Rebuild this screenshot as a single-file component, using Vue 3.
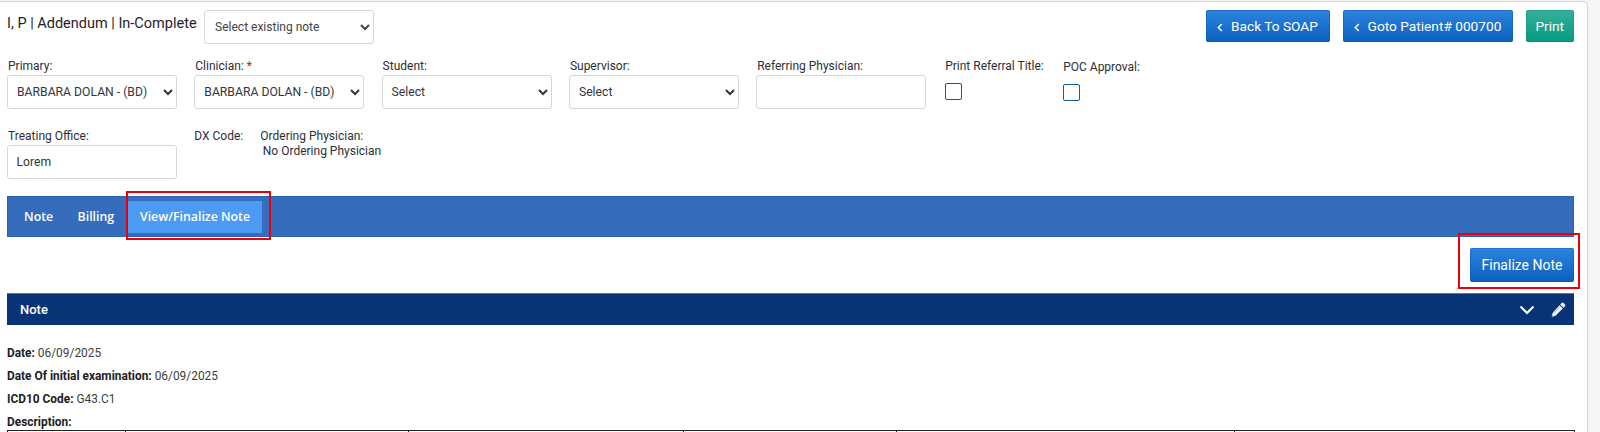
<script setup>
const doctor = 'BARBARA DOLAN - (BD)'
const selects = [
  { label: 'Primary:', value: doctor },
  { label: 'Clinician:', value: doctor, required: true },
  { label: 'Student:', value: 'Select' },
  { label: 'Supervisor:', value: 'Select' },
]
const details = [
  { label: 'Date:', value: '06/09/2025' },
  { label: 'Date Of initial examination:', value: '06/09/2025' },
  { label: 'ICD10 Code:', value: 'G43.C1' },
]
const tableWidths = [118, 283, 275, 213, 338, 340]
</script>

<template>
  <div class="page">
    <main class="card">
      <header class="top">
        <h1 class="title">I, P | Addendum | In-Complete</h1>
        <select class="note-select"><option>Select existing note</option></select>
        <div class="actions">
          <button class="btn btn-back">
            <svg class="lt" width="6" height="9" viewBox="0 0 6 9"><path d="M4.800 1 1.300 4.500 4.800 8" fill="none" stroke="#fff" stroke-width="1.500"/></svg>Back To SOAP
          </button>
          <button class="btn btn-goto">
            <svg class="lt" width="6" height="9" viewBox="0 0 6 9"><path d="M4.800 1 1.300 4.500 4.800 8" fill="none" stroke="#fff" stroke-width="1.500"/></svg>Goto Patient# 000700
          </button>
          <button class="btn btn-print">Print</button>
        </div>
      </header>

      <section class="row row-one">
        <div v-for="s in selects" :key="s.label" class="field">
          <label class="lbl">{{ s.label }}<span v-if="s.required" class="req"> *</span></label>
          <select class="ctl"><option>{{ s.value }}</option></select>
        </div>
        <div class="field field-ref">
          <label class="lbl">Referring Physician:</label>
          <input class="ctl" />
        </div>
        <div class="field field-print">
          <label class="lbl">Print Referral Title:</label>
          <span class="check"></span>
        </div>
        <div class="field field-poc">
          <label class="lbl">POC Approval:</label>
          <span class="check"></span>
        </div>
      </section>

      <section class="row row-two">
        <div class="field">
          <label class="lbl">Treating Office:</label>
          <input class="ctl" value="Lorem" />
        </div>
        <div class="dx">DX Code:</div>
        <div class="ordering">
          <div>Ordering Physician:</div>
          <div class="ordering-value">No Ordering Physician</div>
        </div>
      </section>

      <nav class="tabs">
        <a class="tab tab-first">Note</a>
        <a class="tab">Billing</a>
        <a class="tab active">View/Finalize Note<i class="mark mark-tab"></i></a>
      </nav>

      <div class="finalize-row">
        <button class="btn btn-finalize">Finalize Note<i class="mark mark-btn"></i></button>
      </div>

      <div class="note-bar">
        <span>Note</span>
        <span class="bar-icons">
          <svg width="16" height="10" viewBox="0 0 16 10"><path d="M1.500 1.500 8 8l6.500-6.500" fill="none" stroke="#fff" stroke-width="2.200"/></svg>
          <svg width="15" height="15" viewBox="0 0 15 15">
            <path d="M10.600 1.100a1.400 1.400 0 0 1 2 0l1.300 1.300a1.400 1.400 0 0 1 0 2l-1.400 1.400-3.300-3.300z" fill="#f2f6fc"/>
            <path d="M8.500 3.200l3.300 3.300-7.300 7.300-3.800.9.900-3.800z" fill="#f2f6fc"/>
            <path d="M2.400 11.500 9 4.900" stroke="#9db9e6" stroke-width=".8" fill="none"/>
            <path d="M.7 14.700l.5-2.200 1.700 1.700z" fill="#8fb0e6"/>
          </svg>
        </span>
      </div>

      <div class="details">
        <p v-for="d in details" :key="d.label"><b>{{ d.label }}</b> {{ d.value }}</p>
        <p><b>Description:</b></p>
      </div>

      <table class="tbl">
        <colgroup><col v-for="w in tableWidths" :key="w" :style="{ width: w + 'px' }" /></colgroup>
        <tbody><tr><td v-for="w in tableWidths" :key="w">&nbsp;</td></tr></tbody>
      </table>
    </main>
  </div>
</template>

<style>
html, body { margin: 0; background: #f4f5f7; }
</style>

<style scoped>
.page {
  height: 432px;
  overflow: hidden;
  padding-top: 1px;
  box-sizing: border-box;
  font-family: Roboto, "Liberation Sans", sans-serif;
  color: #26292e;
}
.card {
  width: 1588px;
  height: 460px;
  box-sizing: border-box;
  background: #fff;
  border: 1px solid #c6dcc4;
  border-left: 0;
  border-radius: 0 5px 0 0;
  padding: 8px 13px 0 7px;
}
.top { display: flex; align-items: flex-start; height: 34px; }
.title { margin: 5px 7.500px 0 0; font-size: 14.500px; line-height: 18px; font-weight: 400; white-space: nowrap; color: #1f2228; }
.note-select {
  width: 170px; height: 34px; box-sizing: border-box; font: 12px Roboto, sans-serif; color: #444;
  background: #fff; border: 1px solid #d5d7da; border-radius: 3px; padding-left: 6px;
}
.actions { margin-left: auto; display: flex; gap: 13px; }
.btn {
  border: 0; border-radius: 2px; color: #fff; font: 13.700px Roboto, sans-serif; padding: 0; cursor: pointer;
  background: linear-gradient(#2b84e0, #0c60bd); box-shadow: inset 0 0 0 1px rgba(10, 80, 170, .35);
  position: relative;
}
.btn-back { width: 124px; height: 32px; }
.btn-goto { width: 170px; height: 32px; }
.btn-print { width: 48.500px; height: 32px; background: linear-gradient(#36b09c, #069a82); box-shadow: inset 0 0 0 1px rgba(0, 120, 100, .25); }
.lt { margin-right: 8px; vertical-align: -0.500px; }
.row { display: flex; }
.row-one { margin-top: 15px; height: 50px; }
.row-two { margin-top: 20px; height: 50px; }
.field { width: 170px; margin-right: 17.300px; display: flex; flex-direction: column; }
.lbl { font-size: 12px; line-height: 14px; height: 16px; color: #2c2f35; white-space: nowrap; padding-left: 1px; }
.req { color: #e00; }
.ctl {
  width: 170px; height: 34px; box-sizing: border-box; font: 12.200px Roboto, sans-serif; color: #33363b;
  background: #fff; border: 1px solid #d5d7da; border-radius: 3px; padding: 0 0 0 5px;
}
input.ctl { padding-left: 8.500px; }
.field-ref { margin-right: 19px; }
.field-print { width: 118px; margin-right: 0; }
.field-print .lbl { padding-left: 0; }
.field-poc { width: 100px; }
.field-poc .lbl { padding-left: 0; margin-top: 1px; }
.check { width: 17px; height: 17px; border: 1.500px solid #1a55a8; border-radius: 2px; box-sizing: border-box; margin-top: 8px; }
.dx { font-size: 12px; line-height: 15px; width: 66px; color: #2c2f35; }
.ordering { font-size: 12px; line-height: 14.500px; color: #2c2f35; }
.ordering-value { padding-left: 2.500px; }
.tabs {
  margin-top: 17px; height: 41px; box-sizing: border-box; background: #356dbc; border: 1px solid #2a62b4;
  display: flex; align-items: flex-start; font-family: "Open Sans", sans-serif; font-size: 12.300px; color: #fff; padding: 4px 0 0 16px;
}
.tab { height: 32px; line-height: 31px; margin-right: 26px; font-weight: 600; position: relative; }
.tab-first { margin-right: 24.500px; }
.tab.active { background: #4c9af1; width: 134px; text-align: center; margin-left: -12px; }
.mark { position: absolute; border: 2.500px solid #e8000d; box-sizing: border-box; pointer-events: none; }
.mark-tab { left: -2px; top: -10px; width: 145px; height: 49px; }
.mark-btn { left: -12px; top: -15px; width: 122px; height: 56px; }
.finalize-row { display: flex; justify-content: flex-end; margin-top: 11px; }
.btn-finalize { width: 104px; height: 34px; font-size: 14px; }
.note-bar {
  margin-top: 11px; height: 32px; background: #083377; color: #fff; font-size: 13px; font-weight: 500;
  display: flex; align-items: center; justify-content: space-between; padding: 0 8px 0 13px; box-sizing: border-box;
  border-top: 1px solid #5b76a6;
}
.bar-icons { display: flex; align-items: center; gap: 16px; }
.details { margin-top: 21px; font-size: 11.900px; line-height: 15px; color: #3a3d43; }
.details p { margin: 0 0 8px; }
.details p:last-child { margin: 0; }
.details b { font-weight: 700; color: #1c1e22; }
.tbl { width: 1567px; border-collapse: collapse; table-layout: fixed; }
.tbl td { border: 1px solid #222; height: 20px; padding: 0; }
</style>
